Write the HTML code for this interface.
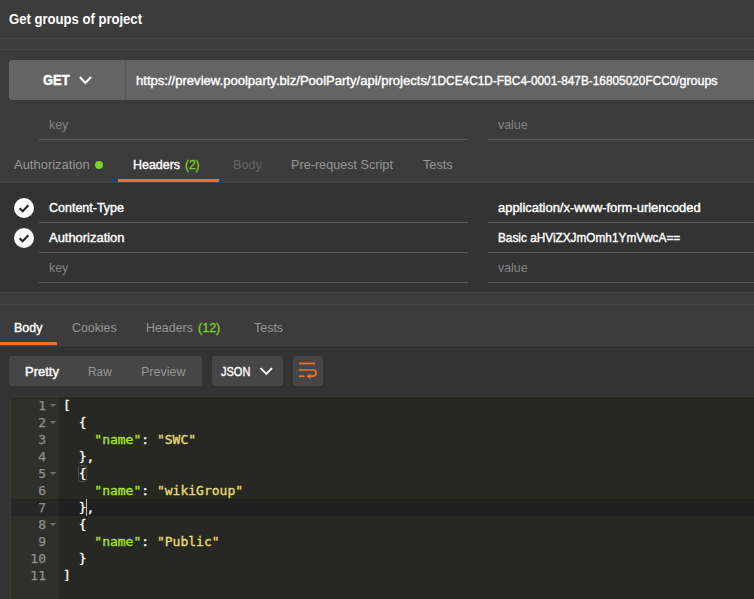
<!DOCTYPE html>
<html><head><meta charset="utf-8"><title>Get groups of project</title>
<style>
*{box-sizing:border-box;margin:0;padding:0}
html,body{width:754px;height:599px;overflow:hidden;background:#3c3c3c}
body{position:relative;font-family:"Liberation Sans","DejaVu Sans",sans-serif;font-size:13px;color:#fff}
.abs{position:absolute}
.t{position:absolute;white-space:nowrap;line-height:16px;height:16px;transform-origin:0 50%;display:block}
.hl{position:absolute;height:1px;background:#484848}
.ul{position:absolute;height:1px;background:#5c5c5c}
.w{color:#fff;-webkit-text-stroke:0.4px #fff}
.ph{color:#848484}
.dim{color:#969696}
.off{color:#666}
.grn{color:#7ed321;-webkit-text-stroke:0.3px #7ed321}
.b{font-weight:bold;-webkit-text-stroke:0}
.gb{-webkit-text-stroke:0.5px #fff}
.code{position:absolute;left:63px;font-family:"DejaVu Sans Mono","Liberation Mono",monospace;font-size:13px;line-height:17px;height:17px;white-space:pre;color:#f8f8f2;-webkit-text-stroke:0.35px}
.ln{position:absolute;left:10px;width:36px;text-align:right;font-family:"DejaVu Sans Mono","Liberation Mono",monospace;font-size:13px;line-height:17px;height:17px;color:#8f908a;-webkit-text-stroke:0.25px}
.k{color:#a6e22e}.s{color:#e6db74}
.fold{position:absolute;left:49.5px;width:0;height:0;border-left:3px solid transparent;border-right:3px solid transparent;border-top:3.5px solid #74756f}
</style></head><body>
<!-- title bar separators -->
<div class="hl" style="left:0;width:754px;top:38px"></div>
<div class="hl" style="left:0;width:754px;top:49px"></div>

<!-- URL bar -->
<div class="abs" style="left:9px;top:60px;width:745px;height:40px;background:#646464;border-radius:3px 0 0 3px"></div>
<div class="abs" style="left:125px;top:60px;width:1px;height:40px;background:#585858"></div>
<svg class="abs" style="left:77px;top:72px" width="18" height="16" viewBox="0 0 18 16"><path d="M2.8 5 L8.4 11 L14 5" fill="none" stroke="#fff" stroke-width="2.1"/></svg>

<!-- params row underlines -->
<div class="ul" style="left:39px;width:429px;top:139px"></div>
<div class="ul" style="left:488px;width:266px;top:139px"></div>

<!-- request tabs -->
<div class="abs" style="left:95px;top:161px;width:8px;height:8px;border-radius:50%;background:#7ed321"></div>

<!-- headers section -->
<div class="abs" style="left:0;top:182px;width:754px;height:111px;background:#333;border-top:1px solid #444;border-bottom:1px solid #444"></div>
<div class="abs" style="left:118px;top:179px;width:101px;height:3px;background:#f47023"></div>

<svg class="abs" style="left:14px;top:198px" width="20" height="20" viewBox="0 0 20 20"><circle cx="10" cy="10" r="10" fill="#fff"/><path d="M5.6 10.2 L8.6 13.2 L14.4 7.2" fill="none" stroke="#222" stroke-width="2"/></svg>
<svg class="abs" style="left:14px;top:228px" width="20" height="20" viewBox="0 0 20 20"><circle cx="10" cy="10" r="10" fill="#fff"/><path d="M5.6 10.2 L8.6 13.2 L14.4 7.2" fill="none" stroke="#222" stroke-width="2"/></svg>

<div class="ul" style="left:39px;width:429px;top:222px"></div>
<div class="ul" style="left:488px;width:266px;top:222px"></div>
<div class="ul" style="left:39px;width:429px;top:252px"></div>
<div class="ul" style="left:488px;width:266px;top:252px"></div>
<div class="ul" style="left:39px;width:429px;top:282px"></div>
<div class="ul" style="left:488px;width:266px;top:282px"></div>

<div class="hl" style="left:0;width:754px;top:304px"></div>

<!-- response area -->
<div class="abs" style="left:0;top:345px;width:754px;height:254px;background:#333;border-top:1px solid #444"></div>
<div class="abs" style="left:0;top:342px;width:57px;height:3px;background:#f47023"></div>

<!-- view buttons -->
<div class="abs" style="left:9px;top:356px;width:193px;height:30px;background:#464646;border-radius:3px"></div>
<div class="abs" style="left:212px;top:356px;width:71px;height:30px;background:#464646;border-radius:3px"></div>
<svg class="abs" style="left:258px;top:363px" width="18" height="16" viewBox="0 0 18 16"><path d="M2.6 5.2 L8.3 11 L14 5.2" fill="none" stroke="#fff" stroke-width="1.9"/></svg>
<div class="abs" style="left:293px;top:356px;width:30px;height:30px;background:#464646;border-radius:3px"></div>
<svg class="abs" style="left:293px;top:356px" width="30" height="30" viewBox="0 0 30 30"><g fill="none" stroke="#f47023" stroke-width="1.7"><path d="M6 7.5 H22"/><path d="M6 14 H20 A3.1 3.1 0 0 1 20 20.2 H15"/><path d="M6 20.2 H11.5"/></g><path d="M13.5 20.2 L17.5 17.2 V23.2 Z" fill="#f47023"/></svg>

<div class="t b w" id="title" style="left:8.7px;top:11px;font-size:14px;transform:scaleX(0.9344)">Get groups of project</div>
<div class="t b w gb" id="get" style="left:42.7px;top:72px;font-size:15px;transform:scaleX(0.8598)">GET</div>
<div><div class="t w" id="url1" style="left:136.2px;top:73px;font-size:13px;transform:scaleX(1.0050)">https://preview.poolparty.biz/PoolParty/api/projects/</div><div class="t w" id="url2" style="left:430.5px;top:73px;font-size:13px;transform:scaleX(0.9101)">1DCE4C1D-FBC4-0001-847B-16805020FCC0</div><div class="t w" id="url3" style="left:675.7px;top:73px;font-size:13px;transform:scaleX(0.9591)">/groups</div></div>
<div class="t ph" id="pkey" style="left:49.3px;top:117px;font-size:13px;transform:scaleX(0.9439)">key</div>
<div class="t ph" id="pval" style="left:497.7px;top:117px;font-size:13px;transform:scaleX(0.9524)">value</div>
<div class="t dim" id="tab1" style="left:13.9px;top:157px;font-size:13px;transform:scaleX(0.9975)">Authorization</div>
<div><div class="t w" id="tab2a" style="left:132.7px;top:157px;font-size:13px;transform:scaleX(0.9565)">Headers</div> <div class="t grn" id="tab2b" style="left:184.7px;top:157px;font-size:13px;transform:scaleX(0.9188)">(2)</div></div>
<div class="t off" id="tab3" style="left:233.4px;top:157px;font-size:13px;transform:scaleX(0.9760)">Body</div>
<div class="t dim" id="tab4" style="left:291.4px;top:157px;font-size:13px;transform:scaleX(0.9727)">Pre-request Script</div>
<div class="t dim" id="tab5" style="left:422.7px;top:157px;font-size:13px;transform:scaleX(0.9755)">Tests</div>
<div class="t w" id="h1k" style="left:48.7px;top:200px;font-size:13px;transform:scaleX(0.9610)">Content-Type</div>
<div class="t w" id="h1v" style="left:497.5px;top:200px;font-size:13px;transform:scaleX(0.9948)">application/x-www-form-urlencoded</div>
<div class="t w" id="h2k" style="left:48.7px;top:230px;font-size:13px;transform:scaleX(0.9948)">Authorization</div>
<div class="t w" id="h2v" style="left:497.5px;top:230px;font-size:13px;transform:scaleX(0.9082)">Basic aHViZXJmOmh1YmVwcA==</div>
<div class="t ph" id="h3k" style="left:49.3px;top:260px;font-size:13px;transform:scaleX(0.9439)">key</div>
<div class="t ph" id="h3v" style="left:497.7px;top:260px;font-size:13px;transform:scaleX(0.9524)">value</div>
<div class="t w" id="r1" style="left:13.7px;top:320px;font-size:13px;transform:scaleX(0.9591)">Body</div>
<div class="t dim" id="r2" style="left:72.0px;top:320px;font-size:13px;transform:scaleX(0.9496)">Cookies</div>
<div><div class="t dim" id="r3a" style="left:146.4px;top:320px;font-size:13px;transform:scaleX(0.9544)">Headers</div> <div class="t grn" id="r3b" style="left:197.7px;top:320px;font-size:13px;transform:scaleX(0.9643)">(12)</div></div>
<div class="t dim" id="r4" style="left:254.2px;top:320px;font-size:13px;transform:scaleX(0.9590)">Tests</div>
<div class="t w" id="b1" style="left:24.9px;top:364px;font-size:13px;transform:scaleX(1.0009)">Pretty</div>
<div class="t dim" id="b2" style="left:88.1px;top:364px;font-size:13px;transform:scaleX(0.9148)">Raw</div>
<div class="t dim" id="b3" style="left:141.1px;top:364px;font-size:13px;transform:scaleX(0.9643)">Preview</div>
<div class="t w" id="b4" style="left:220.7px;top:364px;font-size:13px;transform:scaleX(0.8479)">JSON</div>

<!-- editor -->
<div class="abs" style="left:10px;top:396px;width:744px;height:203px;background:#272822;border-top:1px solid #3a3a3a;border-left:1px solid #3a3a3a;border-radius:3px 0 0 0;overflow:hidden">
  <div class="abs" style="left:0;top:0;width:48px;height:203px;background:#2f3129"></div>
  <div class="abs" style="left:0;top:102px;width:744px;height:17px;background:#202020"></div>
  <div class="abs" style="left:0;top:102px;width:48px;height:17px;background:#272727"></div>
</div>
<div class="ln" style="top:397px">1</div><div class="code" style="top:397px">[</div>
<div class="ln" style="top:414px">2</div><div class="code" style="top:414px">  {</div>
<div class="ln" style="top:431px">3</div><div class="code" style="top:431px">    <span class="k">"name"</span>: <span class="s">"SWC"</span></div>
<div class="ln" style="top:448px">4</div><div class="code" style="top:448px">  },</div>
<div class="ln" style="top:465px">5</div><div class="code" style="top:465px">  {</div>
<div class="ln" style="top:482px">6</div><div class="code" style="top:482px">    <span class="k">"name"</span>: <span class="s">"wikiGroup"</span></div>
<div class="ln" style="top:499px">7</div><div class="code" style="top:499px">  },</div>
<div class="ln" style="top:516px">8</div><div class="code" style="top:516px">  {</div>
<div class="ln" style="top:533px">9</div><div class="code" style="top:533px">    <span class="k">"name"</span>: <span class="s">"Public"</span></div>
<div class="ln" style="top:550px">10</div><div class="code" style="top:550px">  }</div>
<div class="ln" style="top:567px">11</div><div class="code" style="top:567px">]</div>
<div class="fold" style="top:404px"></div>
<div class="fold" style="top:421px"></div>
<div class="fold" style="top:472px"></div>
<div class="fold" style="top:523px"></div>
<!-- bracket match + cursor -->
<div class="abs" style="left:78px;top:465px;width:9px;height:17px;border:1px solid #4a4a44;border-radius:2px"></div>
<div class="abs" style="left:86px;top:499px;width:1px;height:17px;background:#c8c8c2"></div>

</body></html>
